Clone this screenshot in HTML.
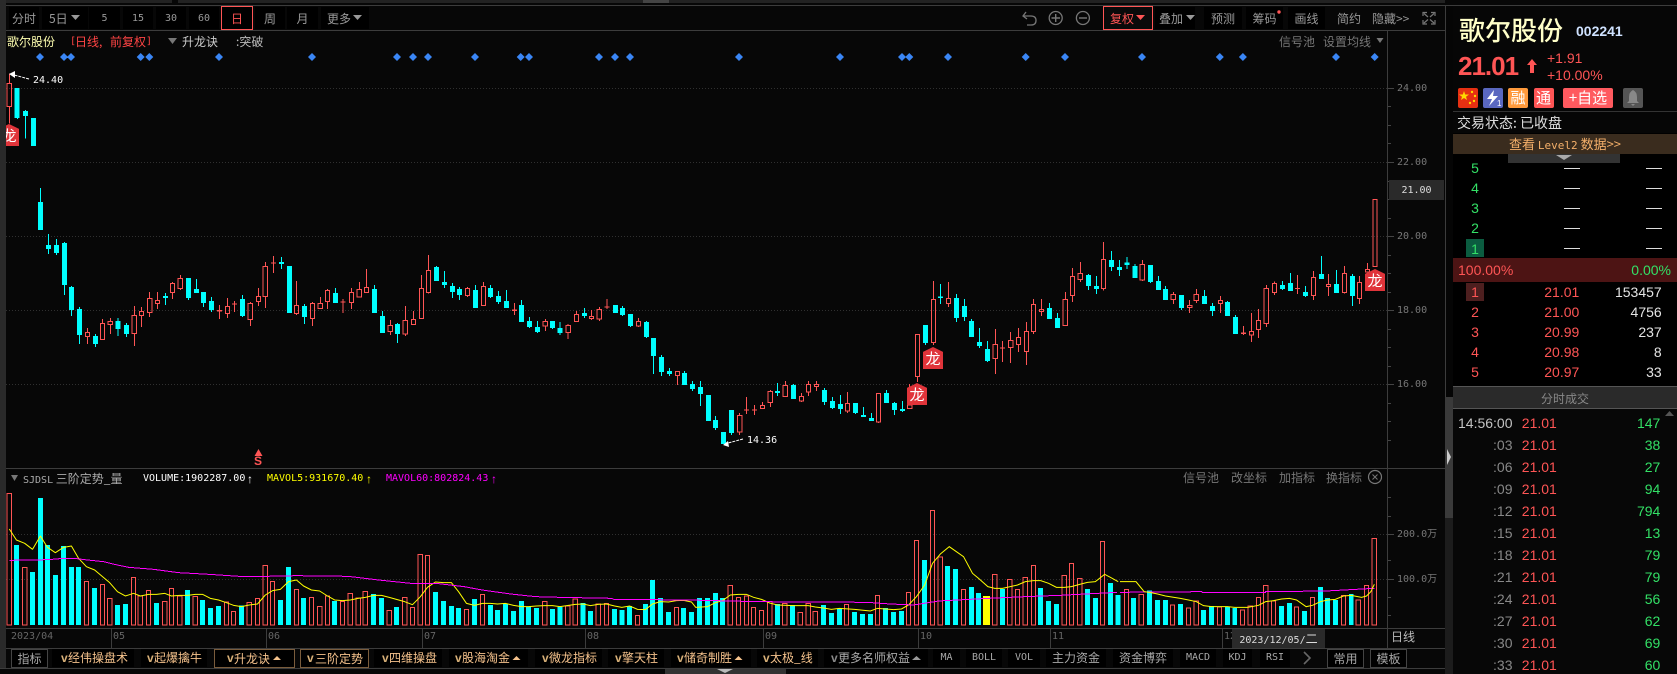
<!DOCTYPE html>
<html lang="zh"><head><meta charset="utf-8"><title>歌尔股份</title>
<style>
html,body{margin:0;padding:0;background:#070707;width:1677px;height:674px;overflow:hidden}
#p{position:relative;width:1677px;height:674px;overflow:hidden;font:12px/14px "WenQuanYi Zen Hei","Noto Sans CJK SC",sans-serif;color:#999}
#p div,#p span{position:absolute;white-space:nowrap}
.b{top:7px;height:22px;line-height:24px;background:#000;text-align:center;color:#999}
.m{font:10px/14px "DejaVu Sans Mono","Liberation Mono",monospace}
.n{font:14px/14px "Liberation Sans",sans-serif}
.r{color:#ff5555}.g{color:#33e066}
.q{width:18px;text-align:center}
.pr{width:60px;text-align:right;left:1519.300px}
.vl{width:80px;text-align:right;left:1581.700px;color:#e4e4e4}
.dash{height:1px;width:16px;background:#ddd}
.tm{width:70px;text-align:right;left:1442.500px;color:#888}
.tp{left:1521.800px;color:#ff5555}
.tv{width:60px;text-align:right;left:1600.300px;color:#33e066}
.tb{top:649px;height:18px;line-height:18px;background:#000;color:#f5c28c;text-align:left}
.tb2{top:649px;height:18px;line-height:18px;background:#000;color:#a8a8a8;text-align:center}
.v{position:absolute;font:bold 12px/14px "Liberation Sans",sans-serif;color:#d8b078}
.bd{width:20px;height:22px;background:#e0343a;clip-path:polygon(50% 0,100% 22%,100% 100%,0 100%,0 22%);color:#fff;text-align:center;font:15px/24px "Noto Sans CJK SC",sans-serif}
.ic{top:88px;width:20px;height:20px;border-radius:2px;color:#fff;text-align:center;font:15px/20px "Noto Sans CJK SC",sans-serif}
svg{position:absolute;left:0;top:0}
.w{stroke-width:1;vector-effect:non-scaling-stroke;fill:none}
</style></head><body><div id="p">

<!-- chart graphics -->
<svg width="1677" height="674" shape-rendering="crispEdges">
<rect x="0" y="0" width="172" height="3" fill="#222"/><rect x="178" y="0" width="1267" height="3" fill="#222"/><rect x="643" y="0" width="26" height="3" fill="#444"/>
<path d="M6 5.5H1677M6 30.5H1445M6 468.5H1445M6 628.5H1445M6 648.5H1445M0 668.5H1445M1387.5 30V648" stroke="#3c3c3c" fill="none"/>
<path d="M6 88.5H1387M6 162.5H1387M6 236.5H1387M6 310.5H1387M6 384.5H1387M6 534.5H1387M6 579.5H1387" stroke="#303030" stroke-dasharray="1 2" fill="none"/>
<path d="M1388 88.5H1394M1388 162.5H1394M1388 236.5H1394M1388 310.5H1394M1388 384.5H1394M1388 106.5H1391M1388 125.5H1391M1388 143.5H1391M1388 181.5H1391M1388 199.5H1391M1388 218.5H1391M1388 255.5H1391M1388 273.5H1391M1388 292.5H1391M1388 329.5H1391M1388 347.5H1391M1388 366.5H1391M1388 403.5H1391M1388 421.5H1391M1388 440.5H1391M1388 534.5H1394M1388 579.5H1394M1388 497.5H1391M1388 516.5H1391M1388 560.5H1391M1388 597.5H1391M1388 615.5H1391" stroke="#444" fill="none"/>
<path d="M111.5 629V648M266.5 629V648M422.5 629V648M585.5 629V648M763.5 629V648M918.5 629V648M1050.5 629V648M1222.5 629V648" stroke="#3c3c3c"/>

<!-- candles zoom1 -->
<g transform="scale(.35714,.33333)">
<path d="M47 264V354M71 333V348M94 354V438M113 606V690" stroke="#0ff" stroke-width="14" fill="none"/>
<path class="w" d="M49 354V357M71 330V416M113 564V606" stroke="#0ff"/>
<path class="w" d="M20 250h12V320h-12zM26 220V250M26 320V370" stroke="#f55"/>
</g>
<!-- candles zoom4 -->
<g transform="translate(0,240) scale(.35714,.33333)">
<path d="M136 15V27M158 15V39M181 9V135M200 141V210M222 207V285M267 288V312M331 243V267M354 255V282M463 168V174M528 114V174M550 147V159M570 156V189M592 183V210M679 177V228M788 66V72M811 78V219M853 198V231M939 159V189M1049 147V219M1071 228V279M1113 252V282M1222 81V123M1245 126V135M1267 138V156M1287 147V165M1331 150V204M1373 144V171M1396 168V186M1418 183V204M1460 195V246M1483 243V261M1505 261V276M1547 243V264" stroke="#0ff" stroke-width="14" fill="none"/>
<path class="w" d="M136 -18V42M158 -3V45M181 6V165M200 138V228M222 201V312M267 282V321M331 234V288M354 249V291M463 159V195M528 114V180M550 117V159M570 156V201M592 171V216M679 165V231M788 51V87M853 192V252M939 144V189M1049 135V219M1071 213V279M1113 249V309M1222 78V123M1245 93V144M1267 129V174M1287 141V180M1331 135V204M1373 135V174M1396 153V192M1418 150V204M1460 180V246M1483 231V264M1505 243V279M1547 243V267" stroke="#0ff"/>
<path d="M614 210V214M657 190V194M766 67V70M961 185V188M1440 208V213" stroke="#f55" stroke-width="14" fill="none"/>
<path class="w" stroke="#f55" d="M239 277h12V290h-12zM245 264V277M245 290V312
M281 250h12V298h-12zM287 237V250M287 298V300
M303 244h12V254h-12zM309 234V244M309 254V282
M370 226h12V281h-12zM376 198V226M376 281V318
M390 214h12V227h-12zM396 201V214M396 227V261
M413 176h12V218h-12zM419 156V176M419 218V231
M435 181h12V190h-12zM441 156V181M441 190V207
M477 130h12V157h-12zM483 126V130M483 157V177
M499 115h12V146h-12zM505 105V115M505 146V150
M631 199h12V220h-12zM637 174V199M637 220V234
M695 190h12V238h-12zM701 186V190M701 238V258
M718 169h12V184h-12zM724 144V169M724 184V198
M737 79h12V169h-12zM743 66V79M743 169V204
M824 196h12V221h-12zM830 123V196M830 221V225
M869 190h12V236h-12zM875 186V190M875 236V258
M891 190h12V206h-12zM897 171V190M897 206V207
M911 151h12V184h-12zM917 147V151M917 184V207
M978 157h12V188h-12zM984 144V157M984 188V207
M1000 148h12V171h-12zM1006 126V148
M1020 142h12V158h-12zM1026 87V142
M1087 256h12V275h-12zM1093 240V256M1093 275V285
M1129 241h12V282h-12zM1135 198V241M1135 282V288
M1152 238h12V254h-12zM1158 213V238
M1174 145h12V236h-12zM1180 105V145
M1194 91h12V158h-12zM1200 45V91M1200 158V160
M1303 145h12V167h-12zM1309 141V145M1309 167V171
M1348 139h12V197h-12zM1354 126V139M1354 197V198
M1521 244h12V258h-12zM1527 237V244M1527 258V273
M614 195V237M657 183V216M766 48V99M961 177V219M1440 189V225"/>
</g>
<!-- candles zoom5 -->
<g transform="translate(560,240) scale(.35714,.33333)">
<path d="M0 264V279M68 219V228M155 195V219M175 204V225M197 222V258M242 246V291M262 294V348M284 351V396M307 393V402M349 399V435M371 432V447M393 441V462M416 465V543M435 540V564M458 576V612M480 510V579M609 453V459M654 435V477M741 450V486M763 483V504M785 492V507M827 489V519M850 525V531M872 534V543M914 459V489M937 489V510M959 507V513M1023 255V309M1065 170V174M1110 174V234M1133 198V231M1152 243V291M1175 306V318M1197 327V363M1371 204V237M1393 234V264M1480 105V138M1502 138V147M1544 60V81M1566 81V90" stroke="#0ff" stroke-width="14" fill="none"/>
<path class="w" stroke="#0ff" d="M0 246V285M68 204V234M175 198V228M197 222V261M242 243V294M262 348V402M284 345V408M307 384V408M349 393V435M371 423V453M393 423V498M435 528V570M480 579V585M609 429V468M654 432V435M741 444V495M763 471V507M785 465V522M827 519V522M850 501V531M872 519V543M914 450V459M937 486V525M959 483V516M1023 309V315M1065 132V192M1110 162V246M1133 177V243M1152 237V243M1175 264V324M1197 303V366M1371 189V204M1393 219V234M1480 102V150M1502 108V162M1544 33V93M1566 60V108"/>
<path d="M132 199V203M522 508V512M545 508V512M1239 322V326" stroke="#f55" stroke-width="14" fill="none"/>
<path class="w" stroke="#f55" d="M17 256h12V278h-12zM23 252V256M23 278V297
M40 223h12V245h-12zM46 213V223M46 245V246
M82 229h12V236h-12zM88 210V229M88 236V240
M104 208h12V237h-12zM110 201V208M110 237V243
M214 244h12V258h-12zM220 234V244M220 258V261
M323 394h12V407h-12zM329 407V435
M497 526h12V576h-12zM503 519V526M503 576V585
M561 496h12V506h-12zM567 486V496M567 506V507
M583 454h12V488h-12zM589 450V454M589 488V501
M625 436h12V470h-12zM631 423V436M631 470V471
M670 469h12V483h-12zM676 459V469M676 483V486
M690 433h12V456h-12zM696 423V433M696 456V468
M712 433h12V440h-12zM718 423V433M718 440V453
M799 490h12V513h-12zM805 456V490M805 513V519
M886 460h12V546h-12zM892 546V549
M973 495h12V506h-12zM979 432V495
M995 283h12V410h-12zM1001 410V426
M1040 178h12V308h-12zM1046 123V178M1046 308V315
M1082 175h12V191h-12zM1088 126V175M1088 191V201
M1213 313h12V356h-12zM1219 267V313M1219 356V402
M1256 301h12V323h-12zM1262 276V301M1262 323V369
M1278 292h12V314h-12zM1284 264V292M1284 314V336
M1300 274h12V335h-12zM1306 246V274M1306 335V375
M1320 193h12V275h-12zM1326 177V193M1326 275V282
M1342 208h12V215h-12zM1348 177V208M1348 215V228
M1409 178h12V257h-12zM1415 156V178
M1429 109h12V167h-12zM1435 84V109M1435 167V186
M1451 100h12V119h-12zM1457 66V100M1457 119V126
M1516 58h12V146h-12zM1522 6V58M1522 146V152
M132 177V207M522 471V522M545 495V525M1239 303V366"/>
</g>
<!-- candles zoom6 -->
<g transform="translate(1120,240) scale(.35524,.33333)">
<path d="M20 67V75M42 78V114M86 75V126M108 123V150M128 147V180M173 165V204M238 168V192M260 198V213M303 186V228M325 231V282M457 135V147M480 129V153M522 156V168M567 102V117M610 132V159M654 108V168" stroke="#0ff" stroke-width="14" fill="none"/>
<path class="w" stroke="#0ff" d="M20 51V87M42 72V78M86 126V129M108 108V123M128 138V147M173 204V210M238 150V168M260 189V228M303 183V186M325 225V231M457 123V150M480 99V129M522 138V171M567 48V102M610 90V132M654 102V198"/>
<path d="M347 277V282M500 144V147" stroke="#f55" stroke-width="14" fill="none"/>
<path class="w" stroke="#f55" d="M57 73h12V120h-12zM63 60V73M63 120V123
M144 163h12V179h-12zM150 156V163M150 179V192
M190 196h12V202h-12zM196 180V196M196 202V219
M209 163h12V182h-12zM215 147V163M215 182V189
M277 181h12V190h-12zM283 168V181M283 190V219
M364 274h12V285h-12zM370 219V274M370 285V306
M384 241h12V268h-12zM390 207V241M390 268V294
M406 145h12V250h-12zM412 135V145M412 250V261
M429 130h12V158h-12zM435 124V130M435 158V165
M539 112h12V166h-12zM545 93V112M545 166V180
M581 134h12V140h-12zM587 102V134M587 140V168
M626 100h12V158h-12zM632 78V100M632 158V160
M668 127h12V176h-12zM674 108V127M674 176V192
M691 89h12V96h-12zM697 69V89
M712 -122h12V80h-12z
M347 258V285M500 105V162"/>
</g>

<!-- volume zoom7 -->
<g transform="translate(0,460) scale(.35714,.33333)">
<path fill="none" stroke="#0ff" stroke-width="14" d="M46 255V495M91 336V495M113 114V495M133 255V495M155 345V495M178 258V495M200 321V495M220 321V495M265 384V495M329 435V495M351 432V495M438 429V495M525 390V495M567 420V495M589 444V495M612 438V495M676 436V495M785 420V495M808 321V495M850 414V495M937 423V495M1046 402V495M1068 414V495M1110 441V495M1219 396V495M1242 423V495M1264 438V495M1284 444V495M1329 417V495M1373 435V495M1393 450V495M1415 432V495M1438 453V495M1460 423V495M1480 441V495M1502 444V495M1547 447V495"/>
<path class="w" stroke="#f55" d="M20 100h12V495h-12zM63 322h12V495h-12zM236 364h12V495h-12zM281 373h12V495h-12zM301 415h12V495h-12zM368 352h12V495h-12zM387 408h12V495h-12zM410 391h12V495h-12zM455 424h12V495h-12zM474 385h12V495h-12zM497 408h12V495h-12zM541 409h12V495h-12zM628 426h12V495h-12zM648 454h12V495h-12zM692 427h12V495h-12zM715 415h12V495h-12zM737 316h12V495h-12zM757 364h12V495h-12zM824 388h12V495h-12zM866 412h12V495h-12zM889 439h12V495h-12zM911 408h12V495h-12zM953 424h12V495h-12zM975 400h12V495h-12zM997 414h12V495h-12zM1017 394h12V495h-12zM1084 451h12V495h-12zM1127 412h12V495h-12zM1149 442h12V495h-12zM1171 283h12V495h-12zM1191 286h12V495h-12zM1300 448h12V495h-12zM1345 403h12V495h-12zM1519 424h12V495h-12z"/>
<path class="w" stroke="#ff0" stroke-linejoin="bevel" shape-rendering="auto" d="M26 207L46 240 69 250 91 268 113 228 133 262 155 278 178 262 200 258 220 295 242 320 265 330 287 350 307 368 329 395 351 408 374 400 393 408 416 403 438 403 461 400 480 408 503 406 525 406 547 403 567 403 589 415 612 420 634 428 654 436 676 440 698 435 721 432 743 405 763 392 785 388 808 365 830 360 850 378 872 390 895 393 917 408 937 420 959 422 981 420 1003 415 1023 412 1046 406 1068 406 1090 412 1110 418 1133 425 1155 434 1177 410 1197 382 1219 366 1242 368 1264 368 1284 395 1306 430 1329 436 1351 430 1373 430 1393 432 1415 430 1438 436 1460 440 1480 440 1502 438 1525 437 1547 437 1568 440"/>
<path class="w" stroke="#f0f" d="M26 301L135 299 178 295 215 296 245 300 290 305 320 313 360 322 430 328 500 338 585 343 670 349 745 349 830 347 975 349 1060 360 1150 370 1220 370 1300 380 1350 390 1430 402 1500 410 1568 412"/>
</g>
<!-- volume zoom8 -->
<g transform="translate(560,460) scale(.35714,.33333)">
<path fill="none" stroke="#0ff" stroke-width="14" d="M0 441V495M65 429V495M85 453V495M153 447V495M173 450V495M195 438V495M239 432V495M259 360V495M281 414V495M304 456V495M346 444V495M368 456V495M391 414V495M413 414V495M435 399V495M455 414V495M609 432V495M651 435V495M738 435V495M760 459V495M782 447V495M825 456V495M847 462V495M869 462V495M911 444V495M934 456V495M956 453V495M1021 300V495M1085 318V495M1107 327V495M1152 381V495M1172 399V495M1239 387V495M1346 384V495M1368 423V495M1390 432V495M1477 387V495M1499 414V495M1541 369V495M1563 405V495"/>
<path d="M1194 408V495" stroke="#ff0" stroke-width="20" fill="none"/>
<path class="w" stroke="#f55" d="M16 438h12V495h-12zM37 417h12V495h-12zM101 432h12V495h-12zM124 430h12V495h-12zM211 466h12V495h-12zM320 442h12V495h-12zM471 376h12V495h-12zM494 412h12V495h-12zM516 408h12V495h-12zM536 442h12V495h-12zM558 451h12V495h-12zM581 424h12V495h-12zM623 430h12V495h-12zM667 457h12V495h-12zM689 430h12V495h-12zM709 454h12V495h-12zM796 433h12V495h-12zM883 406h12V495h-12zM970 397h12V495h-12zM992 241h12V495h-12zM1037 151h12V495h-12zM1059 291h12V495h-12zM1124 388h12V495h-12zM1211 343h12V495h-12zM1253 358h12V495h-12zM1275 388h12V495h-12zM1297 352h12V495h-12zM1320 316h12V495h-12zM1406 346h12V495h-12zM1426 310h12V495h-12zM1449 355h12V495h-12zM1513 244h12V495h-12z"/>
<path class="w" stroke="#ff0" shape-rendering="auto" d="M0 440L43 433 65 432 85 437 107 433 130 432 153 438 173 442 195 438 217 448 239 449 259 432 281 425 304 426 326 422 346 421 368 426 380 442 413 440 435 428 455 422 477 405 500 403 522 403 542 412 564 418 587 429 609 435 651 437 695 437 715 441 738 444 760 448 782 445 825 448 869 453 889 445 911 447 934 449 956 447 976 435 998 410 1021 375 1043 310 1065 282 1090 260 1130 290 1155 340 1172 355 1198 380 1217 385 1239 385 1281 375 1303 365 1326 362 1346 362 1368 370 1390 382 1412 382 1432 380 1455 373 1477 367 1499 365 1525 343 1541 352 1563 365"/>
<path class="w" stroke="#f0f" d="M0 412L145 415 150 418 360 420 555 425 860 427 925 432 990 435 1060 423 1200 415 1300 410 1400 406 1560 397"/>
</g>
<!-- volume zoom9 -->
<g transform="translate(1120,460) scale(.35524,.33333)">
<path fill="none" stroke="#0ff" stroke-width="14" d="M38 414V495M83 391V495M106 420V495M128 420V495M170 432V495M235 450V495M258 438V495M302 441V495M323 444V495M455 438V495M477 429V495M519 453V495M564 381V495M584 414V495M606 420V495M651 402V495"/>
<path class="w" stroke="#f55" d="M12 388h12V495h-12zM54 403h12V495h-12zM142 435h12V495h-12zM187 444h12V495h-12zM209 423h12V495h-12zM274 441h12V495h-12zM339 450h12V495h-12zM361 438h12V495h-12zM384 412h12V495h-12zM404 376h12V495h-12zM426 423h12V495h-12zM491 441h12V495h-12zM536 412h12V495h-12zM623 406h12V495h-12zM665 420h12V495h-12zM688 376h12V495h-12zM710 235h12V495h-12z"/>
<path class="w" stroke="#f0f" d="M0 397L230 395 232 397 410 397 410 395 580 393 716 385"/>
<path class="w" stroke="#ff0" shape-rendering="auto" d="M0 365L45 365 68 395 83 397 106 402 128 408 170 415 193 420 215 425 235 437 258 440 302 440 323 442 360 442 390 436 410 425 432 422 455 417 477 415 497 420 524 440 542 436 564 425 584 420 606 418 629 408 651 406 680 412 694 408 706 395 716 373"/>
</g>

<!-- diamonds -->
<g fill="#3a86f5" shape-rendering="auto">
<path d="M36 57l4-4 4 4-4 4zM60 57l4-4 4 4-4 4zM67 57l4-4 4 4-4 4zM136.700 57l4-4 4 4-4 4zM145.300 57l4-4 4 4-4 4zM215 57l4-4 4 4-4 4zM308 57l4-4 4 4-4 4zM393 57l4-4 4 4-4 4zM409 57l4-4 4 4-4 4zM424 57l4-4 4 4-4 4zM471 57l4-4 4 4-4 4zM516.700 57l4-4 4 4-4 4zM525 57l4-4 4 4-4 4zM595 57l4-4 4 4-4 4zM611 57l4-4 4 4-4 4zM626 57l4-4 4 4-4 4zM735 57l4-4 4 4-4 4zM836 57l4-4 4 4-4 4zM898 57l4-4 4 4-4 4zM905.300 57l4-4 4 4-4 4zM944 57l4-4 4 4-4 4zM1021.700 57l4-4 4 4-4 4zM1061 57l4-4 4 4-4 4zM1138 57l4-4 4 4-4 4zM1215.800 57l4-4 4 4-4 4zM1238.900 57l4-4 4 4-4 4zM1332 57l4-4 4 4-4 4zM1370.700 57l4-4 4 4-4 4z"/>
</g>
<!-- annotations -->
<g shape-rendering="auto">
<path d="M29 79L14 75" stroke="#fff" stroke-width="1" stroke-dasharray="3 1"/><path d="M9 74L15 71 15 78z" fill="#fff"/>
<path d="M743 439L728 443" stroke="#fff" stroke-width="1" stroke-dasharray="3 1"/><path d="M723 445L728 441 729 447z" fill="#fff"/>
<path d="M258.500 449L262.500 456H254.500z" fill="#f55"/>
<path d="M168 38H177L172.500 44z" fill="#777"/><path d="M1376.500 38H1383.500L1380 43z" fill="#777"/><path d="M11 475H18L14.500 481z" fill="#777"/>
<path d="M1026 12L1023 16 1027 19M1023 16H1031Q1036 16 1036 20.500T1031 25H1027" fill="none" stroke="#777" stroke-width="1.300"/>
<circle cx="1055.700" cy="18" r="6.500" fill="none" stroke="#777" stroke-width="1.300"/><path d="M1051.500 18H1060M1055.700 14V22" stroke="#777" stroke-width="1.400"/>
<circle cx="1082.900" cy="18" r="6.500" fill="none" stroke="#777" stroke-width="1.300"/><path d="M1079 18H1087" stroke="#777" stroke-width="1.400"/>
<path d="M1423 16V12.500H1427M1431 12.500H1435V16M1435 20V24H1431M1427 24H1423V20M1424 13.500L1428 17M1434 13.500L1430 17M1424 23L1428 19.500M1434 23L1430 19.500" fill="none" stroke="#777" stroke-width="1.200"/>
<circle cx="1375" cy="477" r="6.500" fill="none" stroke="#777" stroke-width="1.200"/><path d="M1372.500 474.500L1377.500 479.500M1377.500 474.500L1372.500 479.500" stroke="#777" stroke-width="1"/>
</g>
</svg>

<!-- strips -->
<div style="left:0;top:0;width:6px;height:668px;background:#2a2a2a;z-index:5"></div>

<!-- top toolbar -->
<div class="b" style="left:9px;width:30px">分时</div>
<div class="b" style="left:42px;width:46px;text-align:left;text-indent:7px">5日</div>
<svg width="10" height="6" style="left:71px;top:15px"><path d="M0 0H9L4.500 5z" fill="#999"/></svg>
<div class="b m" style="left:89px;width:31px;line-height:24px">5</div>
<div class="b m" style="left:123px;width:30px;line-height:24px">15</div>
<div class="b m" style="left:156px;width:30px;line-height:24px">30</div>
<div class="b m" style="left:189px;width:30px;line-height:24px">60</div>
<div class="b" style="left:221px;width:30px;top:6px;height:22px;border:1px solid #f55;color:#f55;background:#000">日</div>
<div class="b" style="left:255px;width:30px">周</div>
<div class="b" style="left:287px;width:31px">月</div>
<div class="b" style="left:321px;width:48px;text-align:left;text-indent:6px">更多</div>
<svg width="10" height="6" style="left:353px;top:15px"><path d="M0 0H9L4.500 5z" fill="#999"/></svg>

<div class="b" style="left:1103px;width:48px;top:6px;height:22px;border:1px solid #f55;color:#f55;background:#0a0a0a;text-align:left;text-indent:6px">复权</div>
<svg width="10" height="6" style="left:1136px;top:15px"><path d="M0 0H9L4.500 5z" fill="#f55"/></svg>
<div class="b" style="left:1155px;width:40px;text-align:left;text-indent:4px">叠加</div>
<svg width="10" height="6" style="left:1186px;top:15px"><path d="M0 0H9L4.500 5z" fill="#999"/></svg>
<div class="b" style="left:1204px;width:38px">预测</div>
<div class="b" style="left:1246px;width:37px">筹码</div>
<svg width="4" height="4" style="left:1277px;top:10px"><circle cx="2" cy="2" r="1.700" fill="#f55"/></svg>
<div class="b" style="left:1288px;width:37px">画线</div>
<div class="b" style="left:1330.500px;width:37px;background:none">简约</div>
<div class="b" style="left:1372px;width:42px;background:none;text-align:left">隐藏&gt;&gt;</div>

<!-- main legend -->
<span style="left:7px;top:35px;color:#ffffb0">歌尔股份</span>
<span class="m" style="left:70px;top:35px;color:#f44">[</span>
<span style="left:75px;top:35px;color:#f44">日线,</span>
<span style="left:110px;top:35px;color:#f44">前复权</span>
<span class="m" style="left:146px;top:35px;color:#f44">]</span>
<span style="left:182px;top:35px;color:#ccc">升龙诀</span>
<span style="left:236px;top:35px;color:#bbb">:突破</span>
<span style="left:1279px;top:35px;color:#777">信号池</span>
<span style="left:1323px;top:35px;color:#777">设置均线</span>

<span class="m" style="left:33px;top:74px;color:#fff">24.40</span>
<span class="m" style="left:747px;top:434px;color:#fff">14.36</span>
<span style="left:254px;top:454px;color:#f55;font:bold 12px/14px 'Liberation Sans',sans-serif">S</span>

<!-- badges -->
<div class="bd" style="left:-1px;top:124px">龙</div>
<div class="bd" style="left:907px;top:383px">龙</div>
<div class="bd" style="left:923px;top:347px">龙</div>
<div class="bd" style="left:1365px;top:269px">龙</div>

<!-- axis labels -->
<span class="m" style="left:1397px;top:82px;color:#777">24.00</span>
<span class="m" style="left:1397px;top:156px;color:#777">22.00</span>
<div class="m" style="left:1389px;top:180px;width:55px;height:20px;line-height:21px;background:#2a2a2a;color:#ddd;text-align:center">21.00</div>
<span class="m" style="left:1397px;top:230px;color:#777">20.00</span>
<span class="m" style="left:1397px;top:304px;color:#777">18.00</span>
<span class="m" style="left:1397px;top:378px;color:#777">16.00</span>
<span class="m" style="left:1397px;top:528px;color:#777">200.0万</span>
<span class="m" style="left:1397px;top:573px;color:#777">100.0万</span>

<!-- volume legend -->
<span style="left:23px;top:472px;color:#aaa"><span class="m" style="position:static">SJDSL</span> 三阶定势_量</span>
<span class="m" style="left:143px;top:472px;color:#fff">VOLUME:1902287.00</span>
<span class="n" style="left:247px;top:472px;color:#fff;font-size:12px">↑</span>
<span class="m" style="left:267px;top:472px;color:#ff0">MAVOL5:931670.40</span>
<span class="n" style="left:366px;top:472px;color:#ff0;font-size:12px">↑</span>
<span class="m" style="left:386px;top:472px;color:#f0f">MAVOL60:802824.43</span>
<span class="n" style="left:491px;top:472px;color:#f0f;font-size:12px">↑</span>
<span style="left:1183px;top:471px;color:#777">信号池</span>
<span style="left:1231px;top:471px;color:#777">改坐标</span>
<span style="left:1279px;top:471px;color:#777">加指标</span>
<span style="left:1326px;top:471px;color:#777">换指标</span>

<!-- date row -->
<span class="m" style="left:11px;top:630px;color:#666">2023/04</span>
<span class="m" style="left:113px;top:630px;color:#666">05</span>
<span class="m" style="left:268px;top:630px;color:#666">06</span>
<span class="m" style="left:424px;top:630px;color:#666">07</span>
<span class="m" style="left:587px;top:630px;color:#666">08</span>
<span class="m" style="left:765px;top:630px;color:#666">09</span>
<span class="m" style="left:920px;top:630px;color:#666">10</span>
<span class="m" style="left:1052px;top:630px;color:#666">11</span>
<span class="m" style="left:1224px;top:630px;color:#666">12</span>
<div style="left:1232px;top:629px;width:93px;height:19px;line-height:19px;background:#2a2a2a;color:#ddd;text-align:center"><span class="m" style="position:static;line-height:19px">2023/12/05/</span>二</div>
<span style="left:1391px;top:630px;color:#bbb">日线</span>

<!-- bottom toolbar -->
<div class="tb2" style="left:11px;width:35px;height:17px;border:1px solid #444">指标</div>
<div class="tb" style="left:52px;width:82px;text-indent:16px">经伟操盘术</div><i class="v" style="left:61px;top:651px;font-style:normal">v</i>
<div class="tb" style="left:141px;width:66px;text-indent:13px">起爆擒牛</div><i class="v" style="left:147px;top:651px;font-style:normal">v</i>
<div class="tb" style="left:214px;width:79px;height:17px;border:1px solid #7a5c3c;text-indent:19px">升龙诀</div><i class="v" style="left:227px;top:651px;font-style:normal">v</i>
<div class="tb" style="left:300px;width:67px;height:17px;border:1px solid #7a5c3c;text-indent:14px">三阶定势</div><i class="v" style="left:307px;top:651px;font-style:normal">v</i>
<div class="tb" style="left:374px;width:68px;text-indent:15px">四维操盘</div><i class="v" style="left:382px;top:651px;font-style:normal">v</i>
<div class="tb" style="left:449px;width:79px;text-indent:13px">股海淘金</div><i class="v" style="left:455px;top:651px;font-style:normal">v</i>
<div class="tb" style="left:535px;width:67px;text-indent:14px">微龙指标</div><i class="v" style="left:542px;top:651px;font-style:normal">v</i>
<div class="tb" style="left:608px;width:56px;text-indent:14px">擎天柱</div><i class="v" style="left:615px;top:651px;font-style:normal">v</i>
<div class="tb" style="left:671px;width:80px;text-indent:13px">储奇制胜</div><i class="v" style="left:677px;top:651px;font-style:normal">v</i>
<div class="tb" style="left:757px;width:61px;text-indent:13px">太极_线</div><i class="v" style="left:763px;top:651px;font-style:normal">v</i>
<div class="tb2" style="left:824px;width:104px;text-align:left;text-indent:14px">更多名师权益</div><i class="v" style="left:831px;top:651px;font-style:normal;color:#888">v</i>
<div class="tb2 m" style="left:933px;width:27px;line-height:18px">MA</div>
<div class="tb2 m" style="left:966px;width:36px;line-height:18px">BOLL</div>
<div class="tb2 m" style="left:1008px;width:32px;line-height:18px">VOL</div>
<div class="tb2" style="left:1046px;width:60px">主力资金</div>
<div class="tb2" style="left:1113px;width:60px">资金博弈</div>
<div class="tb2 m" style="left:1180px;width:36px;line-height:18px">MACD</div>
<div class="tb2 m" style="left:1223px;width:29px;line-height:18px">KDJ</div>
<div class="tb2 m" style="left:1260px;width:30px;line-height:18px">RSI</div>
<div class="tb2" style="left:1327px;width:35px;height:17px;border:1px solid #444">常用</div>
<div class="tb2" style="left:1370px;width:35px;height:17px;border:1px solid #444">模板</div>
<svg width="1677" height="674" style="pointer-events:none">
<path d="M273 660L277 656 281 660zM512.500 660L516.500 656 520.500 660zM734.500 660L738.500 656 742.500 660z" fill="#f5c28c"/>
<path d="M912 660L916.500 656 921 660z" fill="#999"/>
<path d="M1304 652L1310 658 1304 664" fill="none" stroke="#666" stroke-width="1.600"/>
</svg>
<div style="left:665px;top:669px;width:121px;height:5px;background:#333"></div>
<svg width="16" height="4" style="left:717px;top:669px"><path d="M0 0H16L8 4z" fill="#bbb"/></svg>

<!-- splitter -->
<div style="left:1445px;top:6px;width:8px;height:391px;background:#050505;border-left:1px solid #3c3c3c;box-sizing:border-box"></div>
<div style="left:1445px;top:397px;width:8px;height:121px;background:#3a3a3a"></div>
<div style="left:1445px;top:518px;width:8px;height:156px;background:#1c1c1c"></div>
<svg width="6" height="16" style="left:1446px;top:449px"><path d="M1 0L5 8 1 16z" fill="#ccc"/></svg>

<!-- right panel -->
<div style="left:1453px;top:6px;width:224px;height:668px;background:#000"></div>
<div style="left:1453px;top:6px;width:224px;height:127px;background:#060606"></div>
<span style="left:1459px;top:15px;font:500 26px/30px 'Noto Sans CJK SC',sans-serif;color:#ffffc8">歌尔股份</span>
<span style="left:1576px;top:24px;font:bold 14px/14px 'Liberation Sans',sans-serif;color:#cfe2ff">002241</span>
<span style="left:1458px;top:51px;font:bold 26px/30px 'Liberation Sans',sans-serif;color:#ff5555;letter-spacing:-1px">21.01</span>
<svg width="12" height="16" style="left:1525.500px;top:58px"><path d="M6 1L11 7H8V15H4V7H1z" fill="#ff5555"/></svg>
<span class="n r" style="left:1547px;top:51px">+1.91</span>
<span class="n r" style="left:1547px;top:68px">+10.00%</span>

<div class="ic" style="left:1458px;background:#e63012"></div>
<svg width="20" height="20" style="left:1458px;top:88px"><path d="M6 3L7.200 6.500H11L8 8.700 9 12 6 10 3 12 4 8.700 1 6.500H4.800z" fill="#ffd800"/><circle cx="14" cy="4" r="1.200" fill="#ffd800"/><circle cx="17" cy="8" r="1.200" fill="#ffd800"/><circle cx="16" cy="13" r="1.200" fill="#ffd800"/><circle cx="12" cy="15" r="1.200" fill="#ffd800"/></svg>
<div class="ic" style="left:1483px;background:#5a68c0"></div>
<svg width="20" height="20" style="left:1483px;top:88px"><path d="M11 2L4 11H9L6 18 15 8H10z" fill="#fff"/><text x="14" y="18" font-size="8" fill="#fff" font-family="Liberation Sans">1</text></svg>
<div class="ic" style="left:1508px;background:#ff9a3c">融</div>
<div class="ic" style="left:1533.500px;background:#ff5555">通</div>
<div class="ic" style="left:1563px;width:50px;background:#ff5a5f">+自选</div>
<div class="ic" style="left:1623px;background:#555"></div>
<svg width="20" height="20" style="left:1623px;top:88px"><path d="M10 2Q6 4 6 9V13L4 15H16L14 13V9Q14 4 10 2z M8 16H12L10 18z" fill="#888"/></svg>
<div style="left:1453px;top:111px;width:224px;height:1px;background:#333"></div>
<span class="n" style="left:1457px;top:116px;color:#ddd;font-family:'WenQuanYi Zen Hei','Noto Sans CJK SC',sans-serif">交易状态: 已收盘</span>
<div style="left:1453px;top:134px;width:224px;height:20px;line-height:20px;background:#3a2c1e;color:#f5b06a;text-align:center;font-size:13px">查看 <span class="m" style="position:static;line-height:20px;font-size:11px">Level2</span> 数据&gt;&gt;</div>
<div style="left:1508px;top:154px;width:112px;height:9px;background:#333"></div>
<svg width="16" height="5" style="left:1556px;top:155px"><path d="M0 0H16L8 5z" fill="#aaa"/></svg>

<span class="n g q" style="left:1466px;top:161px">5</span><div class="dash" style="left:1564px;top:168px"></div><div class="dash" style="left:1646px;top:168px"></div>
<span class="n g q" style="left:1466px;top:181px">4</span><div class="dash" style="left:1564px;top:188px"></div><div class="dash" style="left:1646px;top:188px"></div>
<span class="n g q" style="left:1466px;top:201px">3</span><div class="dash" style="left:1564px;top:208px"></div><div class="dash" style="left:1646px;top:208px"></div>
<span class="n g q" style="left:1466px;top:221px">2</span><div class="dash" style="left:1564px;top:228px"></div><div class="dash" style="left:1646px;top:228px"></div>
<div class="n g q" style="left:1466px;top:239px;height:18px;line-height:20px;background:#0b5c40">1</div><div class="dash" style="left:1564px;top:248px"></div><div class="dash" style="left:1646px;top:248px"></div>

<div style="left:1453px;top:258px;width:224px;height:24px;background:#4d1414"></div>
<span class="n r" style="left:1458px;top:263px">100.00%</span>
<span class="n g" style="left:1625px;top:263px;width:46px;text-align:right">0.00%</span>

<div class="n r q" style="left:1466px;top:283px;height:18px;line-height:18px;background:#4d1f1f">1</div>
<span class="n r pr" style="top:285px">21.01</span><span class="n vl" style="top:285px">153457</span>
<span class="n r q" style="left:1466px;top:305px">2</span><span class="n r pr" style="top:305px">21.00</span><span class="n vl" style="top:305px">4756</span>
<span class="n r q" style="left:1466px;top:325px">3</span><span class="n r pr" style="top:325px">20.99</span><span class="n vl" style="top:325px">237</span>
<span class="n r q" style="left:1466px;top:345px">4</span><span class="n r pr" style="top:345px">20.98</span><span class="n vl" style="top:345px">8</span>
<span class="n r q" style="left:1466px;top:365px">5</span><span class="n r pr" style="top:365px">20.97</span><span class="n vl" style="top:365px">33</span>

<div style="left:1453px;top:386px;width:224px;height:23px;line-height:24px;background:#2a2a2a;border-top:1px solid #555;border-bottom:1px solid #555;box-sizing:border-box;text-align:center;color:#888">分时成交</div>
<div style="left:1453px;top:409px;width:224px;height:265px;background:#070707"></div>
<svg width="10" height="6" style="left:1665px;top:411px"><path d="M0 5H9L4.500 0z" fill="#555"/></svg>

<span class="n tm" style="top:416px;color:#c4c4c4">14:56:00</span><span class="n tp" style="top:416px">21.01</span><span class="n tv" style="top:416px">147</span>
<span class="n tm" style="top:438px">:03</span><span class="n tp" style="top:438px">21.01</span><span class="n tv" style="top:438px">38</span>
<span class="n tm" style="top:460px">:06</span><span class="n tp" style="top:460px">21.01</span><span class="n tv" style="top:460px">27</span>
<span class="n tm" style="top:482px">:09</span><span class="n tp" style="top:482px">21.01</span><span class="n tv" style="top:482px">94</span>
<span class="n tm" style="top:504px">:12</span><span class="n tp" style="top:504px">21.01</span><span class="n tv" style="top:504px">794</span>
<span class="n tm" style="top:526px">:15</span><span class="n tp" style="top:526px">21.01</span><span class="n tv" style="top:526px">13</span>
<span class="n tm" style="top:548px">:18</span><span class="n tp" style="top:548px">21.01</span><span class="n tv" style="top:548px">79</span>
<span class="n tm" style="top:570px">:21</span><span class="n tp" style="top:570px">21.01</span><span class="n tv" style="top:570px">79</span>
<span class="n tm" style="top:592px">:24</span><span class="n tp" style="top:592px">21.01</span><span class="n tv" style="top:592px">56</span>
<span class="n tm" style="top:614px">:27</span><span class="n tp" style="top:614px">21.01</span><span class="n tv" style="top:614px">62</span>
<span class="n tm" style="top:636px">:30</span><span class="n tp" style="top:636px">21.01</span><span class="n tv" style="top:636px">69</span>
<span class="n tm" style="top:658px">:33</span><span class="n tp" style="top:658px">21.01</span><span class="n tv" style="top:658px">60</span>
</div></body></html>
